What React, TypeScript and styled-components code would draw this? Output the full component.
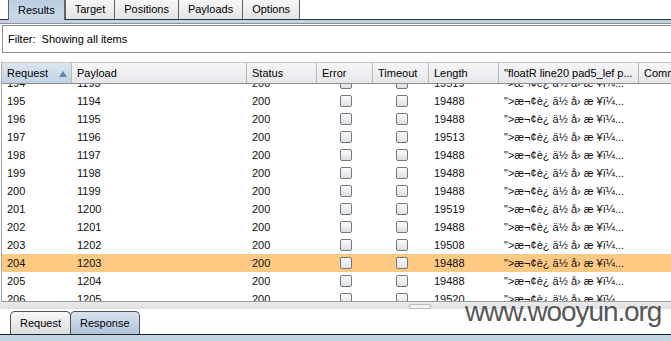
import styled, { createGlobalStyle } from 'styled-components';

const GlobalStyle = createGlobalStyle`
  html, body {
    margin: 0;
    padding: 0;
    overflow: hidden;
    background: #ffffff;
  }
  body {
    font-family: 'Liberation Sans', Arial, sans-serif;
    font-size: 11px;
    color: #111;
  }
`;

type Row = {
  request: number;
  payload: number;
  status: number;
  length: number;
};

const rows: Row[] = [
  { request: 194, payload: 1193, status: 200, length: 19519 },
  { request: 195, payload: 1194, status: 200, length: 19488 },
  { request: 196, payload: 1195, status: 200, length: 19488 },
  { request: 197, payload: 1196, status: 200, length: 19513 },
  { request: 198, payload: 1197, status: 200, length: 19488 },
  { request: 199, payload: 1198, status: 200, length: 19488 },
  { request: 200, payload: 1199, status: 200, length: 19488 },
  { request: 201, payload: 1200, status: 200, length: 19519 },
  { request: 202, payload: 1201, status: 200, length: 19488 },
  { request: 203, payload: 1202, status: 200, length: 19508 },
  { request: 204, payload: 1203, status: 200, length: 19488 },
  { request: 205, payload: 1204, status: 200, length: 19488 },
  { request: 206, payload: 1205, status: 200, length: 19520 },
];

const garbled = '">æ¬¢è¿ ä½ å› æ ¥ï¼...';
const columns = '70px 175px 70px 56px 56px 70px 140px 80px';

export default function App() {
  return (
    <>
      <GlobalStyle />
      <Page>
        <TopTabs>
          <TopTab active>Results</TopTab>
          <TopTab>Target</TopTab>
          <TopTab>Positions</TopTab>
          <TopTab>Payloads</TopTab>
          <TopTab>Options</TopTab>
        </TopTabs>
        <Band />
        <Content>
          <FilterBox>Filter:&nbsp; Showing all items</FilterBox>
          <Table>
            <HeaderRow>
              <HeadCell sorted>
                Request
                <SortArrow />
              </HeadCell>
              <HeadCell>Payload</HeadCell>
              <HeadCell>Status</HeadCell>
              <HeadCell>Error</HeadCell>
              <HeadCell>Timeout</HeadCell>
              <HeadCell>Length</HeadCell>
              <HeadCell>"floatR line20 pad5_lef p...</HeadCell>
              <HeadCell>Comment</HeadCell>
            </HeaderRow>
            <Viewport>
              <RowList>
                {rows.map((r) => (
                  <BodyRow key={r.request} selected={r.request === 204}>
                    <Cell>{r.request}</Cell>
                    <Cell>{r.payload}</Cell>
                    <Cell>{r.status}</Cell>
                    <CheckCell>
                      <Check />
                    </CheckCell>
                    <CheckCell>
                      <Check />
                    </CheckCell>
                    <Cell>{r.length}</Cell>
                    <Cell>{garbled}</Cell>
                    <Cell />
                  </BodyRow>
                ))}
              </RowList>
            </Viewport>
          </Table>
        </Content>
        <Splitter>
          <Grip />
        </Splitter>
        <BottomTabs>
          <BottomTab>Request</BottomTab>
          <BottomTab active>Response</BottomTab>
        </BottomTabs>
        <BottomBand />
        <Watermark>www.wooyun.org</Watermark>
      </Page>
    </>
  );
}

const Page = styled.div`
  position: relative;
  width: 671px;
  height: 341px;
  overflow: hidden;
  background: #ffffff;
`;

const TopTabs = styled.div`
  display: flex;
  align-items: flex-end;
  height: 19px;
  padding-left: 8px;
`;

const TopTab = styled.div<{ active?: boolean }>`
  display: flex;
  align-items: center;
  height: ${(p) => (p.active ? '20px' : '19px')};
  margin-bottom: ${(p) => (p.active ? '-1px' : '0')};
  position: relative;
  z-index: ${(p) => (p.active ? 1 : 0)};
  padding: 0 9px 1px;
  box-sizing: border-box;
  border-left: 1px solid #5f6366;
  border-right: ${(p) => (p.active ? '1px solid #5f6366' : 'none')};
  background: ${(p) =>
    p.active
      ? 'linear-gradient(#b9cde0, #c9d8e6 70%, #c3d3e3)'
      : 'linear-gradient(#f6f6f7, #e3e4e6)'};
  color: #000;
  font-size: 11px;
  &:last-child {
    border-right: 1px solid #5f6366;
  }
`;

const Band = styled.div`
  height: 3px;
  border-top: 1px solid #2d3136;
  border-bottom: 1px solid #8c9096;
  background: #c3d3e3;
`;

const Content = styled.div`
  padding: 1px 0 0 2px;
`;

const FilterBox = styled.div`
  height: 26px;
  display: flex;
  align-items: center;
  padding-left: 5px;
  border: 1px solid #8e8e8e;
  border-right: none;
  background: #ffffff;
  color: #000;
  margin-bottom: 9px;
`;

const Table = styled.div`
  width: 740px;
  border-left: 1px solid #a9a9a9;
  border-bottom: 1px solid #9c9c9c;
  margin-left: -1px;
`;

const HeaderRow = styled.div`
  display: grid;
  grid-template-columns: ${columns};
  height: 22px;
  border-top: 1px solid #c4c4c4;
  border-bottom: 1px solid #8d8d8d;
  box-sizing: border-box;
`;

const HeadCell = styled.div<{ sorted?: boolean }>`
  position: relative;
  display: flex;
  align-items: center;
  padding-left: 5px;
  border-right: 1px solid #b6b9bd;
  background: ${(p) =>
    p.sorted
      ? 'linear-gradient(#dce6f0, #c1d2e2)'
      : 'linear-gradient(#f7f7f8, #e4e6e9)'};
  color: #000;
  white-space: nowrap;
  overflow: hidden;
`;

const SortArrow = styled.span`
  position: absolute;
  right: 4px;
  top: 8px;
  width: 0;
  height: 0;
  border-left: 4px solid transparent;
  border-right: 4px solid transparent;
  border-bottom: 6px solid #5a86b3;
`;

const Viewport = styled.div`
  height: 217px;
  overflow: hidden;
  background: #ffffff;
`;

const RowList = styled.div`
  margin-top: -10px;
`;

const BodyRow = styled.div<{ selected?: boolean }>`
  display: grid;
  grid-template-columns: ${columns};
  height: 18px;
  background: ${(p) => (p.selected ? '#fec982' : '#ffffff')};
`;

const Cell = styled.div`
  display: flex;
  align-items: center;
  padding-left: 5px;
  white-space: nowrap;
  overflow: hidden;
  color: #101010;
`;

const CheckCell = styled.div`
  display: flex;
  align-items: center;
  padding-left: 23px;
`;

const Check = styled.span`
  display: block;
  width: 10px;
  height: 10px;
  border: 1px solid #737a84;
  border-radius: 2px;
  background: linear-gradient(#fdfdfd, #dde0e4);
`;

const Splitter = styled.div`
  display: flex;
  justify-content: center;
  height: 7px;
  background: linear-gradient(#e9eaeb, #dfe1e3);
  padding-left: 168px;
  box-sizing: border-box;
`;

const Grip = styled.span`
  display: block;
  width: 20px;
  height: 3px;
  margin-top: 2px;
  border: 1px solid #b9bcc0;
  border-radius: 2px;
  background: #f1f2f3;
`;

const BottomTabs = styled.div`
  display: flex;
  align-items: flex-end;
  height: 25px;
  padding-left: 10px;
`;

const BottomTab = styled.div<{ active?: boolean }>`
  display: flex;
  align-items: center;
  height: 23px;
  padding: 0 9px;
  box-sizing: border-box;
  border: 1px solid #4f5359;
  border-bottom: none;
  border-radius: 5px 5px 0 0;
  margin-left: ${(p) => (p.active ? '-1px' : '0')};
  background: ${(p) =>
    p.active
      ? 'linear-gradient(#d8e3ee, #aec4da)'
      : 'linear-gradient(#f8f8f8, #dcdddf)'};
  color: #000;
`;

const BottomBand = styled.div`
  height: 6px;
  border-top: 1px solid #1f2226;
  background: #c3d3e3;
`;

const Watermark = styled.div`
  position: absolute;
  left: 465px;
  top: 296px;
  font-family: 'Liberation Sans', Arial, sans-serif;
  font-size: 28px;
  letter-spacing: -1.1px;
  color: #4b4b4b;
  opacity: 0.92;
  white-space: nowrap;
`;
